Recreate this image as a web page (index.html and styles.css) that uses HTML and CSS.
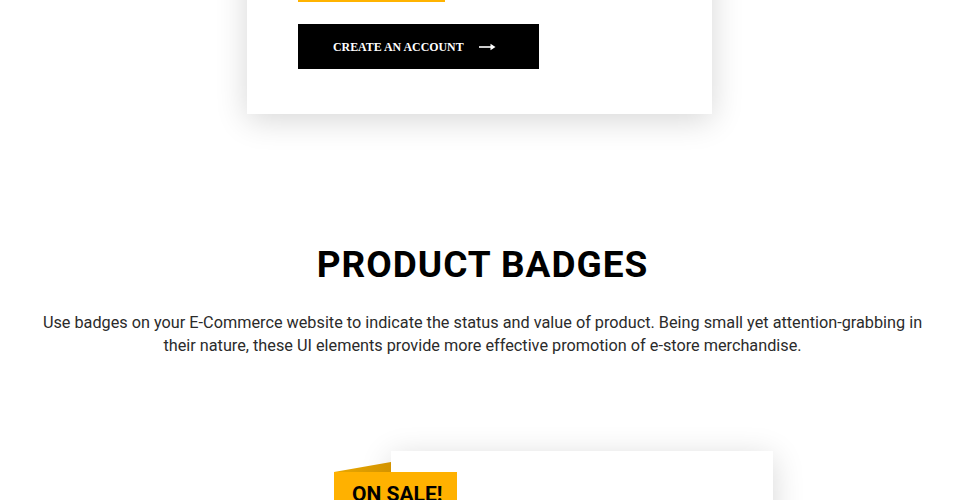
FILE: index.html
```html
<!DOCTYPE html>
<html>
<head>
<meta charset="utf-8">
<link rel="stylesheet" href="styles.css">
</head>
<body>
<section class="top">
  <div class="card">
    <div class="yellow-btn"></div>
    <a class="btn-dark" href="#"><span>CREATE AN ACCOUNT</span><svg class="arrow" width="17" height="8" viewBox="0 0 17 8"><path d="M0 4H15" stroke="#fff" stroke-width="1.6"/><path d="M11.5 0.8L16.5 4L11.5 7.2Z" fill="#fff"/></svg></a>
  </div>
</section>
<section class="intro">
  <h2 class="title">PRODUCT BADGES</h2>
  <p class="lead">Use badges on your E-Commerce website to indicate the status and value of product. Being small yet attention-grabbing in their nature, these UI elements provide more effective promotion of e-store merchandise.</p>
</section>
<section class="demo">
  <div class="product">
    <div class="badge"><span class="fold"></span>ON SALE!</div>
  </div>
</section>
</body>
</html>
```
FILE: styles.css
```css
html, body { margin: 0; padding: 0; background: #fff; overflow: hidden; }
body { font-family: Roboto, "Liberation Sans", sans-serif; height: 500px; }
.top { padding-left: 247px; }
.card {
  width: 465px;
  box-sizing: border-box;
  margin-top: -45px;
  padding: 0 0 45px 51px;
  background: #fff;
  box-shadow: 0 6px 30px rgba(0,0,0,0.16);
  display: flex;
  flex-direction: column;
  align-items: flex-start;
  gap: 22px;
}
.yellow-btn { width: 147px; height: 47px; background: #ffb300; }
.btn-dark {
  width: 241px; height: 45px; box-sizing: border-box;
  background: #000; color: #fff; text-decoration: none;
  display: flex; align-items: center; padding: 2px 0 0 35px; gap: 15px;
  font-family: "Liberation Serif", serif; font-weight: bold; font-size: 11.9px;
}
.arrow { display: block; margin-top: -1px; }
.intro { text-align: center; padding: 129px 30px 0; }
.title { margin: 0; font-size: 37px; font-weight: 700; letter-spacing: 1px; color: #000; line-height: 44px; }
.lead { margin: 24px auto 0; max-width: 905px; font-size: 16.25px; line-height: 23px; color: #2b2b2b; }
.demo { padding: 94px 0 0 391px; }
.product { position: relative; width: 382px; height: 300px; background: #fff; box-shadow: 0 6px 30px rgba(0,0,0,0.16); }
.badge {
  position: absolute; left: -57px; top: 21px;
  width: 123px; height: 40px; box-sizing: border-box;
  padding: 12px 0 0 18px;
  background: #ffb100; color: #000;
  font-weight: 700; font-size: 21px; line-height: 1;
}
.fold {
  position: absolute; left: 0; top: -10px; width: 57px; height: 10px;
  background: linear-gradient(90deg, #e9a800, #d39300);
  clip-path: polygon(0 100%, 100% 0, 100% 100%);
}
```
